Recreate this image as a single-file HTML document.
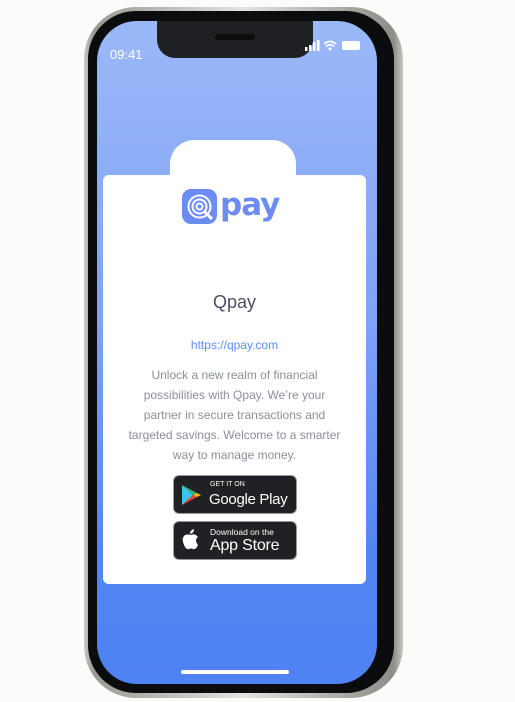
<!DOCTYPE html>
<html><head><meta charset="utf-8"><style>
body{margin:0;width:515px;height:702px;background:#fbfbfa;position:relative;overflow:hidden;font-family:"Liberation Sans",sans-serif}
.frame{position:absolute;left:84px;top:7px;width:319px;height:691px;border-radius:52px;background:linear-gradient(90deg,#c9c9c4,#9a9a94 3%,#e4e4df 50%,#8d8d87 97%,#c8c8c2);}
.bez{position:absolute;left:88px;top:11px;width:306px;height:682px;border-radius:48px;background:#0b0c0e}
.screen{position:absolute;left:97px;top:21px;width:280px;height:663px;border-radius:40px;background:linear-gradient(180deg,#9bb8f8 0%,#7ea2f6 45%,#5486f3 80%,#4f82f2 100%);overflow:hidden}
.notch{position:absolute;left:60px;top:0;width:156px;height:37px;background:#1f2023;border-radius:0 0 18px 18px}
.spk{position:absolute;left:58px;top:13px;width:40px;height:6px;border-radius:3px;background:#0c0c0d}
.time{position:absolute;left:13px;top:26px;color:#fff;font-size:13px}
.tab{position:absolute;left:73px;top:119px;width:126px;height:60px;background:#fff;border-radius:24px 24px 0 0}
.card{position:absolute;left:6px;top:154px;width:263px;height:409px;background:#fff;border-radius:6px;text-align:center}
.home{position:absolute;left:84px;top:649px;width:108px;height:4px;border-radius:2px;background:#fff}
.t{position:absolute;left:0;width:100%}
.btn{position:absolute;left:70px;width:122px;height:37px;background:#202124;border:1px solid #999;border-radius:6px;color:#fff;text-align:left;white-space:nowrap}
</style></head><body>
<div class="frame"></div><div class="bez"></div>
<div class="screen">
<div class="notch"><div class="spk"></div></div>
<div class="time">09:41</div>
<svg style="position:absolute;left:208px;top:18px" width="60" height="14" viewBox="0 0 60 14">
<rect x="0" y="8" width="2.5" height="4" fill="#fff"/><rect x="4" y="6" width="2.5" height="6" fill="#fff"/><rect x="8" y="3" width="2.5" height="9" fill="#fff"/><rect x="12" y="1" width="2.5" height="11" fill="#fff"/>
<path d="M19 5 Q25 0 31 5 M21 7.5 Q25 4 29 7.5" stroke="#fff" stroke-width="1.6" fill="none"/><circle cx="25" cy="10" r="1.5" fill="#fff"/>
<rect x="37" y="2" width="18" height="9" rx="2" fill="#fff"/>
</svg>
<div class="tab"></div>
<div class="card">
<svg style="position:absolute;left:79px;top:12px" width="104" height="40" viewBox="0 0 104 40">
<rect x="0" y="2" width="35" height="35" rx="9" fill="#6b8cf1"/>
<circle cx="17.5" cy="19.5" r="11" fill="none" stroke="#fff" stroke-width="2"/>
<circle cx="17.5" cy="19.5" r="7" fill="none" stroke="#fff" stroke-width="2"/>
<circle cx="17.5" cy="19.5" r="3" fill="none" stroke="#fff" stroke-width="2"/>
<path d="M23 25 L30 32" stroke="#fff" stroke-width="3"/>
<text x="38" y="28" font-family="DejaVu Sans" font-weight="bold" font-size="31" fill="#6b8cf1" letter-spacing="-1">pay</text>
</svg>
<div class="t" style="top:117px;font-size:18px;color:#4b5060">Qpay</div>
<div class="t" style="top:163px;font-size:12px;color:#5d8ef0">https://qpay.com</div>
<div class="t" style="top:190px;font-size:12px;line-height:20px;color:#8a8f9c;white-space:nowrap">Unlock a new realm of financial<br>possibilities with Qpay. We’re your<br>partner in secure transactions and<br>targeted savings. Welcome to a smarter<br>way to manage money.</div>
<div class="btn" style="top:300px">
<svg style="position:absolute;left:7px;top:8px" width="20" height="22" viewBox="0 0 20 22"><path d="M1 1 L12 11 L1 21Z" fill="#3ec2f0"/><path d="M1 1 L16 9 L12 11Z" fill="#34b36a"/><path d="M1 21 L16 13 L12 11Z" fill="#e94336"/><path d="M16 9 L20 11 L16 13 L12 11Z" fill="#fbbc04"/></svg>
<div style="position:absolute;left:36px;top:5px;font-size:7px">GET IT ON</div>
<div style="position:absolute;left:35px;top:15px;font-size:15px;letter-spacing:-0.3px">Google Play</div></div>
<div class="btn" style="top:346px">
<svg style="position:absolute;left:8px;top:7px" width="18" height="22" viewBox="0 0 18 22"><path d="M12 0 Q12 4 8 5 Q8 1 12 0Z M9 6 Q13 4 16 8 Q12 11 16 16 Q14 21 11 20 Q9 19 7 20 Q4 21 2 16 Q-1 9 3 6 Q6 5 9 6Z" fill="#fff"/></svg>
<div style="position:absolute;left:36px;top:5px;font-size:8.5px">Download on the</div>
<div style="position:absolute;left:36px;top:15px;font-size:16px;letter-spacing:-0.2px">App Store</div></div>
</div>
<div class="home"></div>
</div>
</body></html>
